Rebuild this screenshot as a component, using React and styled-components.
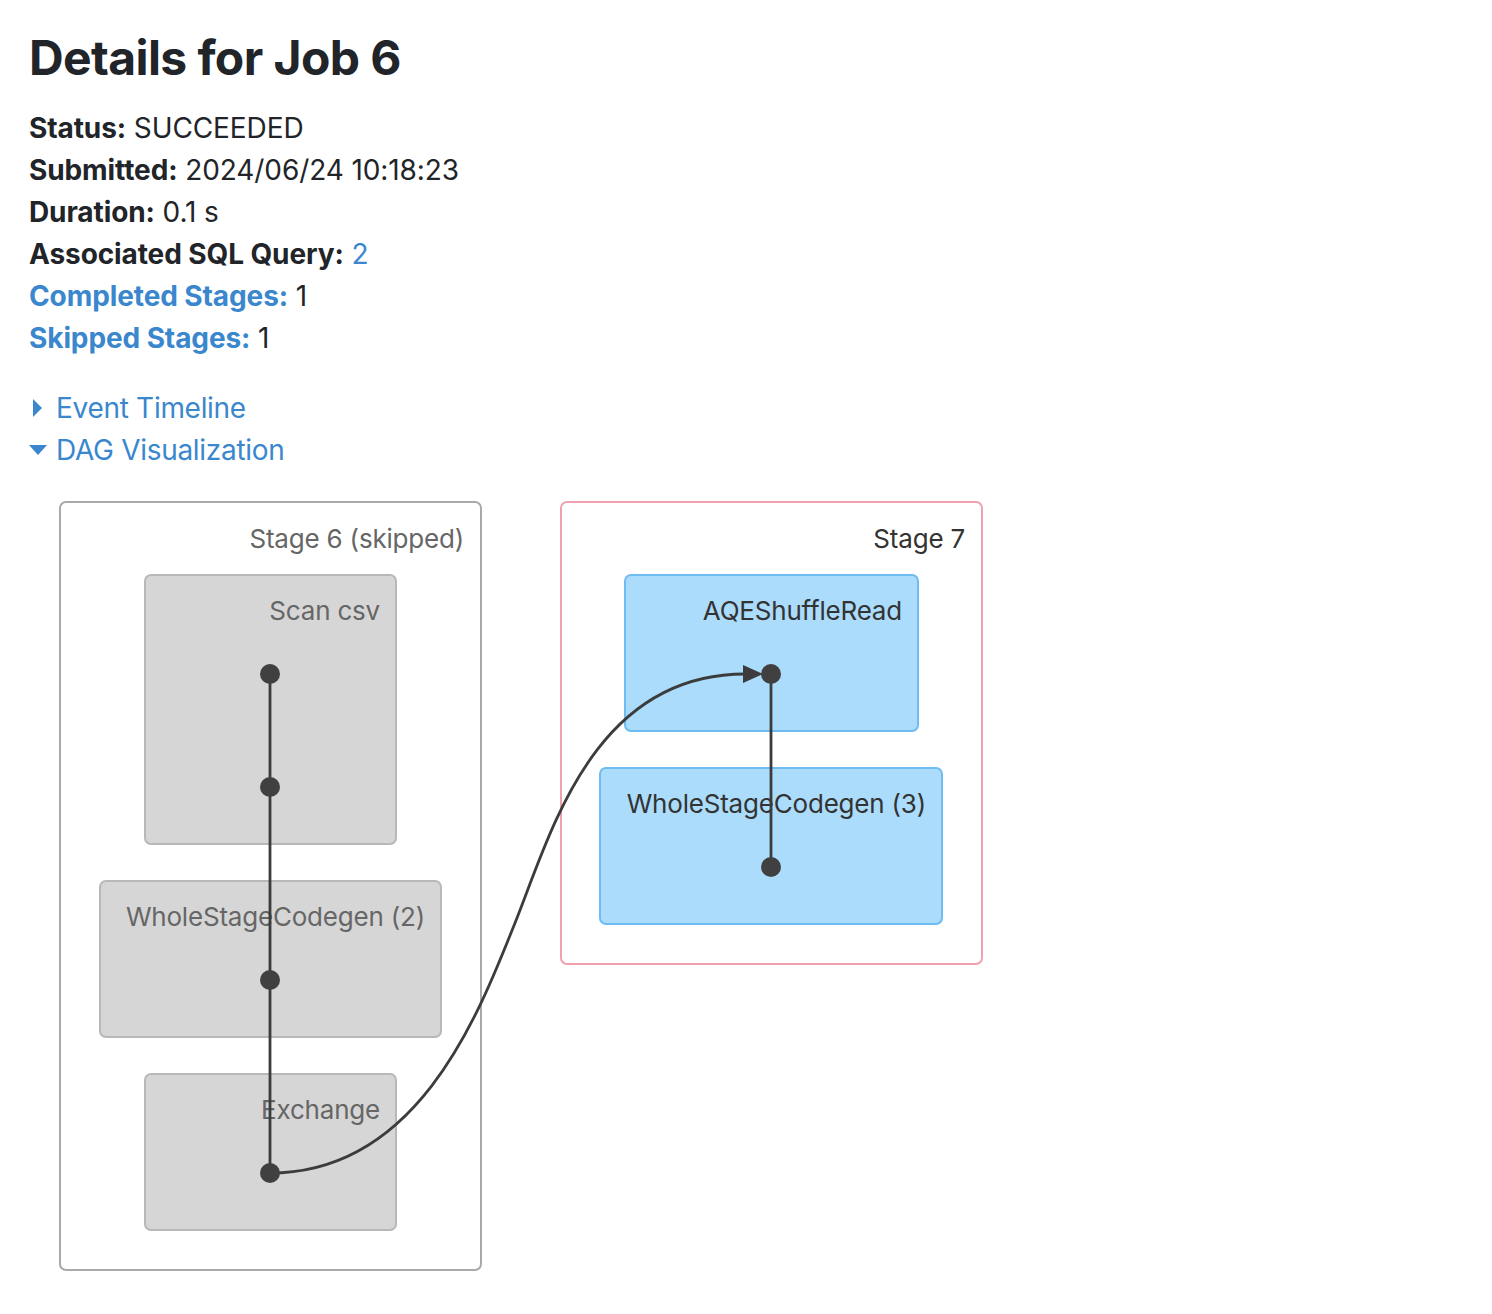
import styled, { createGlobalStyle } from 'styled-components';

const GlobalStyle = createGlobalStyle`
    html, body {
        margin: 0;
        padding: 0;
        background: #ffffff;
    }
    body {
        font-family: Inter, 'Noto Sans', 'Liberation Sans', sans-serif;
        color: #212529;
    }
`;

const Page = styled.div`
    padding: 28px 0 40px 29px;
`;

const Title = styled.h3`
    margin: 0 0 19px;
    font-size: 48px;
    line-height: 60px;
    font-weight: 700;
    letter-spacing: -0.6px;
`;

const Summary = styled.ul`
    list-style: none;
    margin: 0 0 28px;
    padding: 0;
`;

const Item = styled.li`
    font-size: 28px;
    line-height: 42px;
    letter-spacing: -0.1px;
`;

const Label = styled.strong`
    font-weight: 700;
    color: ${(props) => (props.link ? '#3a87cd' : '#212529')};
`;

const Link = styled.a`
    color: #3a87cd;
    text-decoration: none;
`;

const Toggle = styled.div`
    display: flex;
    align-items: center;
    font-size: 28px;
    line-height: 42px;
    letter-spacing: -0.3px;
    color: #3a87cd;
    cursor: pointer;
`;

const Arrow = styled.span`
    display: inline-block;
    width: 27px;
    flex: none;

    &::before {
        content: '';
        display: block;
        width: 0;
        height: 0;
        ${(props) =>
            props.open
                ? `
            margin-left: 0;
            border-left: 9px solid transparent;
            border-right: 9px solid transparent;
            border-top: 10px solid #3a87cd;
        `
                : `
            margin-left: 4px;
            border-top: 9.5px solid transparent;
            border-bottom: 9.5px solid transparent;
            border-left: 9px solid #3a87cd;
        `}
    }
`;

const Dag = styled.svg`
    display: block;
    margin-top: 9px;
    overflow: visible;

    text {
        font-family: Inter, 'Noto Sans', 'Liberation Sans', sans-serif;
        font-size: 26px;
        letter-spacing: -0.2px;
    }
`;

const stages = [
    { x: 60, y: 502, w: 421, h: 768, label: 'Stage 6 (skipped)', skipped: true },
    { x: 561, y: 502, w: 421, h: 462, label: 'Stage 7', skipped: false },
];

const nodes = [
    { x: 145, y: 575, w: 251, h: 269, label: 'Scan csv', skipped: true },
    { x: 100, y: 881, w: 341, h: 156, label: 'WholeStageCodegen (2)', skipped: true },
    { x: 145, y: 1074, w: 251, h: 156, label: 'Exchange', skipped: true },
    { x: 625, y: 575, w: 293, h: 156, label: 'AQEShuffleRead', skipped: false },
    { x: 600, y: 768, w: 342, h: 156, label: 'WholeStageCodegen (3)', skipped: false },
];

const dots = [
    [270, 674],
    [270, 787],
    [270, 980],
    [270, 1173],
    [771, 674],
    [771, 867],
];

const DagGraph = () => (
    <Dag width="960" height="800" viewBox="29 480 960 800">
        {stages.map((s) => (
            <g key={s.label}>
                <rect
                    x={s.x}
                    y={s.y}
                    width={s.w}
                    height={s.h}
                    rx="6"
                    fill="#ffffff"
                    stroke={s.skipped ? '#a9a9a9' : '#f0a1ad'}
                    strokeWidth="2"
                />
                <text
                    x={s.x + s.w - 17}
                    y={s.y + 46}
                    textAnchor="end"
                    fill={s.skipped ? '#666666' : '#333333'}
                >
                    {s.label}
                </text>
            </g>
        ))}
        {nodes.map((n) => (
            <g key={n.label}>
                <rect
                    x={n.x}
                    y={n.y}
                    width={n.w}
                    height={n.h}
                    rx="6"
                    fill={n.skipped ? '#d6d6d6' : '#abdcfb'}
                    stroke={n.skipped ? '#b8b8b8' : '#6ebcf1'}
                    strokeWidth="2"
                />
                <text
                    x={n.x + n.w - 16}
                    y={n.y + 45}
                    textAnchor="end"
                    fill={n.skipped ? '#666666' : '#333333'}
                >
                    {n.label}
                </text>
            </g>
        ))}
        <line x1="270" y1="674" x2="270" y2="1173" stroke="#3c3c3c" strokeWidth="2.8" />
        <line x1="771" y1="674" x2="771" y2="867" stroke="#3c3c3c" strokeWidth="2.8" />
        <path
            d="M270 1173 C420 1173, 480 1010, 515 923 C550 836, 592 674, 745 674"
            fill="none"
            stroke="#3c3c3c"
            strokeWidth="2.8"
        />
        <polygon points="743,665 763,674 743,683" fill="#3c3c3c" />
        {dots.map(([cx, cy]) => (
            <circle key={`${cx}-${cy}`} cx={cx} cy={cy} r="10" fill="#404040" />
        ))}
    </Dag>
);

const App = () => (
    <>
        <GlobalStyle />
        <Page>
            <Title>Details for Job 6</Title>
            <Summary>
                <Item>
                    <Label>Status:</Label> SUCCEEDED
                </Item>
                <Item>
                    <Label>Submitted:</Label> 2024/06/24 10:18:23
                </Item>
                <Item>
                    <Label>Duration:</Label> 0.1 s
                </Item>
                <Item>
                    <Label>Associated SQL Query:</Label> <Link href="#">2</Link>
                </Item>
                <Item>
                    <Label link>Completed Stages:</Label> 1
                </Item>
                <Item>
                    <Label link>Skipped Stages:</Label> 1
                </Item>
            </Summary>
            <Toggle>
                <Arrow />
                Event Timeline
            </Toggle>
            <Toggle>
                <Arrow open />
                DAG Visualization
            </Toggle>
            <DagGraph />
        </Page>
    </>
);

export default App;
